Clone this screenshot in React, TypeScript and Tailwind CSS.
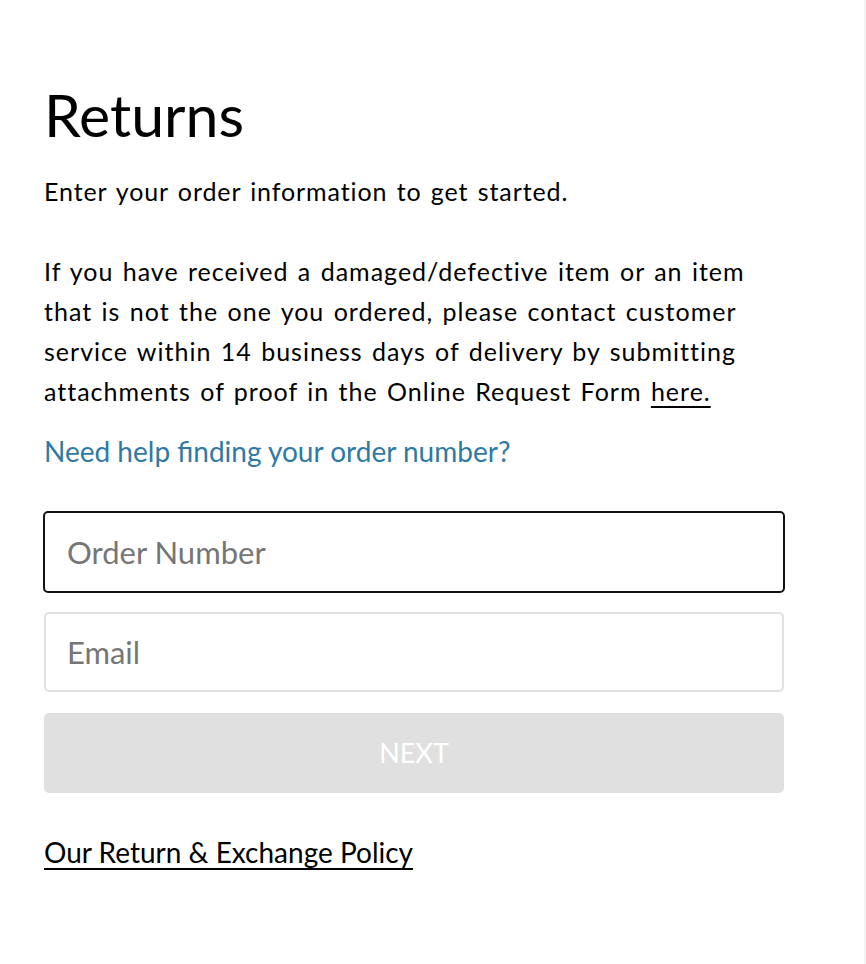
import React from "react";

export default function App() {
  return (
    <div className="min-h-[964px] w-full bg-white border-r-2 border-[#f3f3f3]" style={{ fontFamily: "Lato, 'Open Sans', sans-serif" }}>
      <div className="pl-[44px] pt-[75px] w-[820px]">
        <h1 className="text-[59px] leading-[80px] text-black font-normal">Returns</h1>
        <p className="mt-[16px] text-[25px] leading-[40px] text-black tracking-[0.9px] [word-spacing:2px]">Enter your order information to get started.</p>
        <p className="mt-[40px] text-[25px] leading-[40px] text-black tracking-[1px] [word-spacing:2px]">
          If you have received a damaged/defective item or an item
          <br />
          that is not the one you ordered, please contact customer
          <br />
          service within 14 business days of delivery by submitting
          <br />
          attachments of proof in the Online Request Form{" "}
          <a className="underline underline-offset-[5px]">here.</a>
        </p>
        <a className="block mt-[20px] text-[28px] leading-[40px] text-[#2f7aa5]">Need help finding your order number?</a>
        <div className="mt-[40px] flex flex-col w-[740px]">
          <input
            placeholder="Order Number"
            className="h-[82px] w-[742px] -ml-px rounded-[5px] border-2 border-[#111] px-[22px] text-[31px] placeholder:text-[#767676] outline-none"
          />
          <input
            placeholder="Email"
            className="mt-[19px] h-[80px] w-full rounded-[5px] border-2 border-[#e1e1e1] px-[21px] text-[31px] placeholder:text-[#767676] outline-none"
          />
          <button className="mt-[21px] h-[80px] w-full rounded-[5px] bg-[#e0e0e0] text-white text-[27px]">NEXT</button>
        </div>
        <a className="inline-block mt-[39px] text-[28px] leading-[40px] text-black underline underline-offset-[5px]">Our Return &amp; Exchange Policy</a>
      </div>
    </div>
  );
}
